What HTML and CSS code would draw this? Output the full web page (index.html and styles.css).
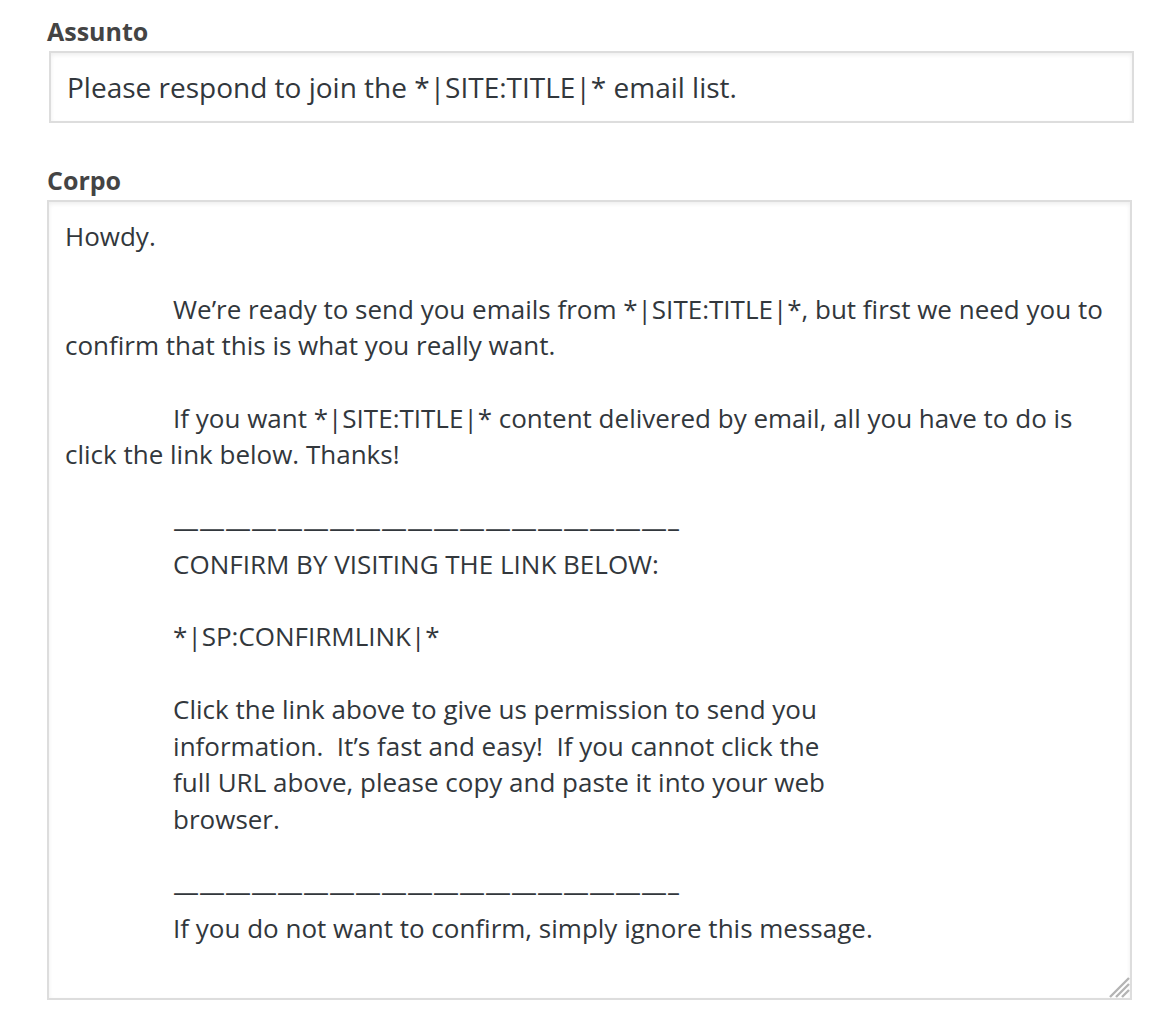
FILE: index.html
```html
<!DOCTYPE html>
<html lang="pt">
<head>
<meta charset="utf-8">
<title>Assunto e Corpo</title>
<link rel="stylesheet" href="styles.css">
</head>
<body>
<form class="form">
  <div class="field">
    <label class="label" for="subject">Assunto</label>
    <input class="input" id="subject" type="text" value="Please respond to join the *|SITE:TITLE|* email list.">
  </div>
  <div class="field field-body">
    <label class="label" for="body">Corpo</label>
    <div class="textarea-wrap">
      <textarea class="textarea" id="body">Howdy.

&#9;&#9;We’re ready to send you emails from *|SITE:TITLE|*, but first we need you to confirm that this is what you really want.

&#9;&#9;If you want *|SITE:TITLE|* content delivered by email, all you have to do is click the link below. Thanks!

&#9;&#9;———————————————————–
&#9;&#9;CONFIRM BY VISITING THE LINK BELOW:

&#9;&#9;*|SP:CONFIRMLINK|*

&#9;&#9;Click the link above to give us permission to send you
&#9;&#9;information.  It’s fast and easy!  If you cannot click the
&#9;&#9;full URL above, please copy and paste it into your web
&#9;&#9;browser.

&#9;&#9;———————————————————–
&#9;&#9;If you do not want to confirm, simply ignore this message.</textarea>
      <svg class="grip" width="24" height="24" viewBox="0 0 24 24" aria-hidden="true">
        <path d="M23 4 L4 23 M23 10 L10 23 M23 16 L16 23" stroke="#b4b4b4" stroke-width="2.4" fill="none"/>
      </svg>
    </div>
  </div>
</form>
</body>
</html>
```

FILE: styles.css
```css
* {
  box-sizing: border-box;
}

html, body {
  margin: 0;
  padding: 0;
  background: #ffffff;
}

body {
  font-family: "Open Sans", "Noto Sans", sans-serif;
  color: #32373c;
}

.form {
  display: flex;
  flex-direction: column;
  padding: 14px 0 0 47px;
  width: 1134px;
}

.field {
  display: flex;
  flex-direction: column;
}

.field-body {
  margin-top: 40px;
}

.label {
  display: block;
  font-size: 25px;
  font-weight: 700;
  line-height: 34px;
  color: #444444;
  margin-bottom: 3px;
}

.input {
  display: block;
  margin: 0 0 0 2px;
  width: 1085px;
  height: 72px;
  padding: 14px 16px;
  border: 2px solid #dddddd;
  border-radius: 0;
  box-shadow: inset 0 2px 4px rgba(0, 0, 0, 0.07);
  background: #ffffff;
  font-family: "Open Sans", "Noto Sans", sans-serif;
  font-size: 28px;
  line-height: 40px;
  color: #32373c;
  outline: none;
}

.textarea-wrap {
  position: relative;
  width: 1085px;
  height: 800px;
}

.textarea {
  display: block;
  width: 100%;
  height: 100%;
  margin: 0;
  padding: 16px 16px;
  border: 2px solid #dddddd;
  border-radius: 0;
  box-shadow: inset 0 2px 4px rgba(0, 0, 0, 0.07);
  background: #ffffff;
  font-family: "Open Sans", "Noto Sans", sans-serif;
  font-size: 26px;
  line-height: 36.4px;
  color: #32373c;
  resize: none;
  overflow: hidden;
  outline: none;
  tab-size: 8;
}

.grip {
  position: absolute;
  right: 2px;
  bottom: 2px;
}
```
